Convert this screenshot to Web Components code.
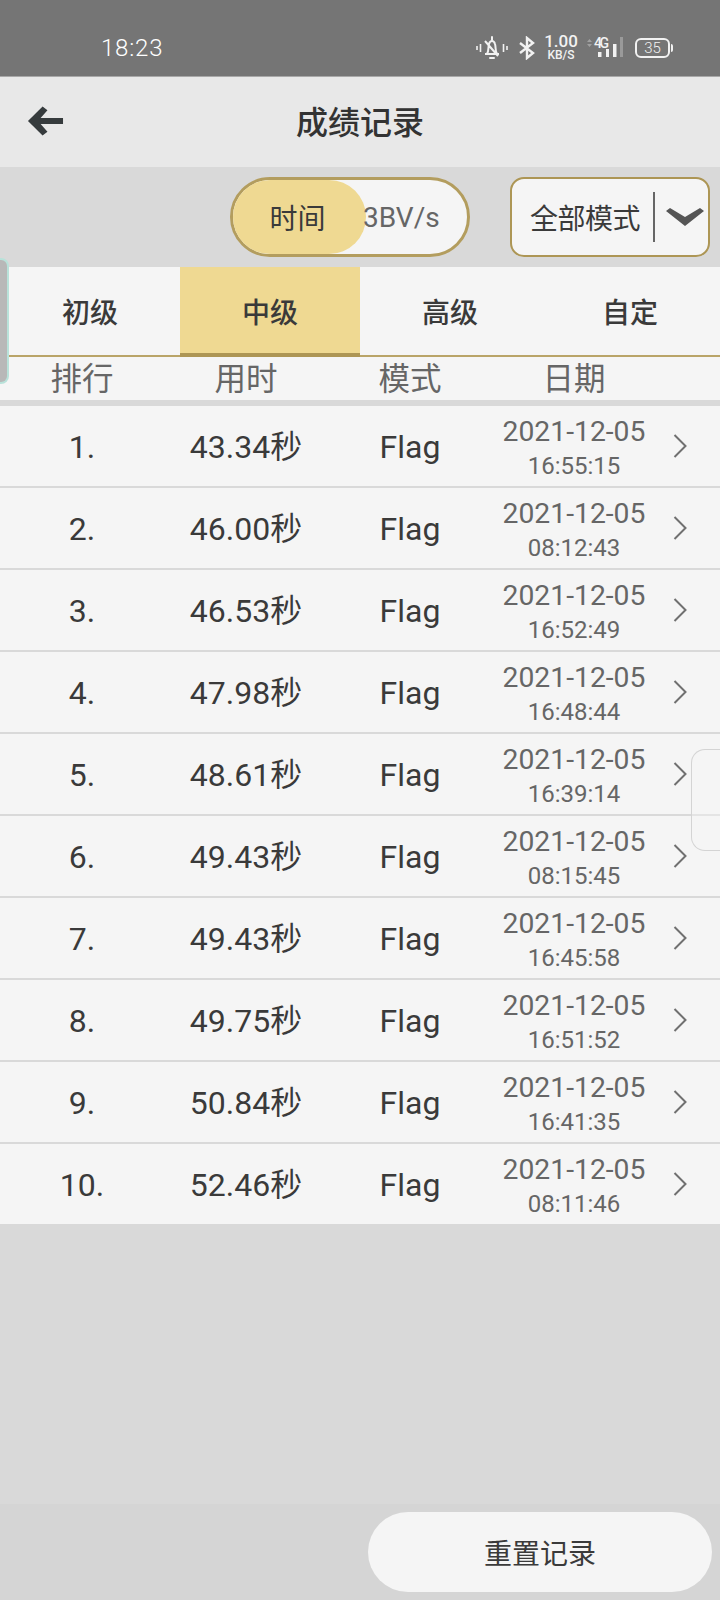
<!DOCTYPE html>
<html lang="zh">
<head>
<meta charset="utf-8">
<title>成绩记录</title>
<style>
    html, body { margin: 0; padding: 0; }
    body {
        width: 720px; height: 1600px; overflow: hidden; position: relative;
        background: #d9d9d9; color: #333;
        font-family: Roboto, "Noto Sans CJK SC", sans-serif;
        display: flex; flex-direction: column;
    }
    .spacer { flex: 1; }
</style>
</head>
<body>
<status-bar></status-bar>
<app-bar>成绩记录</app-bar>
<record-controls></record-controls>
<level-tabs></level-tabs>
<record-header></record-header>
<record-list></record-list>
<div class="spacer"></div>
<reset-footer>重置记录</reset-footer>
<side-handle side="left"></side-handle>
<side-handle side="right"></side-handle>

<script>
const RECORDS = [
    ['1.', '43.34秒', '16:55:15'],
    ['2.', '46.00秒', '08:12:43'],
    ['3.', '46.53秒', '16:52:49'],
    ['4.', '47.98秒', '16:48:44'],
    ['5.', '48.61秒', '16:39:14'],
    ['6.', '49.43秒', '08:15:45'],
    ['7.', '49.43秒', '16:45:58'],
    ['8.', '49.75秒', '16:51:52'],
    ['9.', '50.84秒', '16:41:35'],
    ['10.', '52.46秒', '08:11:46']
];

class StatusBar extends HTMLElement {
    constructor() {
        super();
        this.attachShadow({ mode: 'open' });
        this.shadowRoot.innerHTML = `
            <style>
                :host {
                    display: flex; align-items: center; box-sizing: border-box;
                    height: 77px; padding: 19px 0 0 101px; flex: none;
                    background: #757575; border-bottom: 1px solid #a8a8a8;
                    color: #f2f2f2;
                }
                .time { font-size: 24px; font-weight: 300; letter-spacing: 0.8px; color: #fff; }
                .icons { margin-left: auto; margin-right: 47px; display: flex; align-items: center; }
                .speed { display: flex; flex-direction: column; align-items: center; width: 34px; margin: 0 7px 0 9px; font-weight: 500; }
                .speed b { font-size: 17px; line-height: 15px; font-weight: 500; }
                .speed span { font-size: 12px; line-height: 12px; }
                svg { display: block; }
            </style>
            <span class="time">18:23</span>
            <div class="icons">
                <svg width="32" height="28" viewBox="0 0 32 28" fill="none" stroke="#f2f2f2" stroke-width="2">
                    <path d="M1 12v4M4.5 10v8M27.5 10v8M31 12v4" stroke-width="1.6"/>
                    <path d="M9 20h14M11 20c2-3 1-7 2-10 .6-2 2-3 3-3s2.4 1 3 3c1 3 0 7 2 10M9 7l13 15"/>
                    <path d="M16 3v3M14 24h4" stroke-linecap="round"/>
                </svg>
                <svg style="margin-left:11px" width="16" height="24" viewBox="0 0 16 24" fill="none" stroke="#f2f2f2" stroke-width="2.4">
                    <path d="M1 7l13 10-6 5V2l6 5L1 17"/>
                </svg>
                <div class="speed"><b>1.00</b><span>KB/S</span></div>
                <svg width="38" height="28" viewBox="0 0 38 28">
                    <path d="M2 8l2.500-3 2.500 3zM2 10l2.500 3 2.500-3z" fill="#a0a0a0"/>
                    <text x="9" y="14" font-size="14" font-weight="500" font-family="Roboto" fill="#f2f2f2" textLength="15">4G</text>
                    <rect x="13" y="18" width="3.500" height="5" fill="#f2f2f2"/>
                    <rect x="21" y="15" width="3" height="8" fill="#f2f2f2"/>
                    <rect x="28" y="10" width="3.500" height="13" fill="#f2f2f2"/>
                    <rect x="35" y="3" width="3" height="20" fill="#9a9a9a"/>
                </svg>
                <div style="margin-left:12px;display:flex;align-items:center">
                    <div style="box-sizing:border-box;width:35px;height:20px;border:2px solid #f2f2f2;border-radius:6px;font-size:15px;line-height:16px;text-align:center;font-weight:300">35</div>
                    <div style="width:2px;height:8px;background:#f2f2f2;margin-left:1px;border-radius:0 2px 2px 0"></div>
                </div>
            </div>
        `;
    }
}

class AppBar extends HTMLElement {
    constructor() {
        super();
        this.attachShadow({ mode: 'open' });
        this.shadowRoot.innerHTML = `
            <style>
                :host {
                    display: flex; align-items: center; justify-content: center;
                    position: relative; flex: none; box-sizing: border-box; height: 90px; padding-bottom: 4px;
                    background: #e8e8e8; color: #333;
                    font-size: 32px; font-weight: 500;
                }
                svg { position: absolute; left: 27px; top: 28px; }
            </style>
            <svg width="37" height="32" viewBox="0 0 38 32" fill="#363b3d">
                <path d="M16 1l5 4-7 8h23v6H14l7 8-5 4L1 16z"/>
            </svg>
            <slot></slot>
        `;
    }
}

class RecordControls extends HTMLElement {
    constructor() {
        super();
        this.attachShadow({ mode: 'open' });
        this.shadowRoot.innerHTML = `
            <style>
                :host {
                    display: flex; align-items: center; justify-content: flex-end; gap: 40px;
                    box-sizing: border-box; flex: none; height: 100px; padding: 0 10px 0 0;
                    font-size: 28px; background: #d9d9d9;
                }
                .toggle {
                    box-sizing: border-box; width: 240px; height: 80px; display: flex; overflow: hidden;
                    border: 3px solid #b39d5e; border-radius: 40px; background: #f5f5f5;
                }
                .on {
                    width: 133px; padding-right: 4px; box-sizing: border-box; display: flex; align-items: center; justify-content: center;
                    background: #efd992; border-radius: 0 38px 38px 0; color: #3a3a3a;
                }
                .off { display: flex; align-items: center; margin-left: -3px; color: #666; }
                .select {
                    box-sizing: border-box; width: 200px; height: 80px; display: flex; align-items: center;
                    border: 2px solid #ad9655; border-radius: 14px; background: #f5f5f5; color: #3a3a3a;
                    padding-left: 18px; white-space: nowrap; letter-spacing: -0.5px;
                }
                .bar { width: 2px; height: 50px; background: #666; margin: 0 11px 0 13px; flex: none; }
            </style>
            <div class="toggle"><div class="on">时间</div><div class="off">3BV/s</div></div>
            <div class="select">
                <span>全部模式</span><span class="bar"></span>
                <svg width="38" height="20" viewBox="0 0 38 20" fill="#555"><path d="M0 4l4-3 15 9 15-9 4 3-19 15z"/></svg>
            </div>
        `;
    }
}

class LevelTabs extends HTMLElement {
    constructor() {
        super();
        this.attachShadow({ mode: 'open' });
        const tabs = ['初级', '中级', '高级', '自定'];
        this.shadowRoot.innerHTML = `
            <style>
                :host {
                    display: grid; grid-template-columns: repeat(4, 180px); flex: none;
                    box-sizing: border-box; height: 90px; background: #f5f5f5;
                    border-bottom: 2px solid #b9a468;
                    font-size: 28px; font-weight: 500; color: #3a3a3a;
                }
                div { display: flex; align-items: center; justify-content: center; box-sizing: border-box; }
                .active { background: #efd992; border-bottom: 4px solid #ad9655; margin-bottom: -2px; height: 90px; padding-top: 2px; }
            </style>
            ${tabs.map((t, i) => `<div class="${i === 1 ? 'active' : ''}">${t}</div>`).join('')}
        `;
    }
}

class RecordHeader extends HTMLElement {
    constructor() {
        super();
        this.attachShadow({ mode: 'open' });
        this.shadowRoot.innerHTML = `
            <style>
                :host {
                    display: grid; grid-template-columns: repeat(4, 164px) 1fr; align-items: center;
                    box-sizing: border-box; flex: none; height: 49px; background: #f5f5f5;
                    border-bottom: 6px solid #d9d9d9; padding-top: 2px; line-height: 36px;
                    font-size: 31.5px; color: #666; text-align: center;
                }
            </style>
            <span>排行</span><span>用时</span><span>模式</span><span>日期</span>
        `;
    }
}

class RecordRow extends HTMLElement {
    connectedCallback() {
        if (this.shadowRoot) return;
        this.attachShadow({ mode: 'open' });
        const d = this.dataset;
        this.shadowRoot.innerHTML = `
            <style>
                :host {
                    display: grid; grid-template-columns: repeat(4, 164px) 1fr; align-items: center;
                    box-sizing: border-box; height: 82px; background: #f5f5f5;
                    border-bottom: 2px solid #d9d9d9;
                    font-size: 32px; line-height: 36px; color: #3a3a3a; text-align: center;
                }
                :host(:last-child) { border-bottom: 0; height: 80px; }
                .cell { display: block; height: 36px; margin-top: 1px; overflow: visible; }
                .date { font-size: 28.3px; line-height: 36px; color: #666; }
                .clock { font-size: 24px; line-height: 32px; color: #666; }
                .date-cell { display: flex; flex-direction: column; margin-top: 4px; }
                svg { margin-left: 17px; display: block; }
            </style>
            <span class="cell">${d.rank}</span>
            <span class="cell">${d.time}</span>
            <span class="cell">Flag</span>
            <div class="date-cell"><span class="date">2021-12-05</span><span class="clock">${d.clock}</span></div>
            <svg width="14" height="24" viewBox="0 0 14 24" fill="none" stroke="#707070" stroke-width="2"><path d="M1.5 1l11 11-11 11"/></svg>
        `;
    }
}

class RecordList extends HTMLElement {
    constructor() {
        super();
        this.attachShadow({ mode: 'open' });
        this.shadowRoot.innerHTML = `
            <style>:host { display: block; flex: none; }</style>
            <slot></slot>
        `;
    }

    connectedCallback() {
        if (this.children.length) return;
        RECORDS.forEach(r => {
            const row = document.createElement('record-row');
            row.dataset.rank = r[0];
            row.dataset.time = r[1];
            row.dataset.clock = r[2];
            this.appendChild(row);
        });
    }
}

class ResetFooter extends HTMLElement {
    constructor() {
        super();
        this.attachShadow({ mode: 'open' });
        this.shadowRoot.innerHTML = `
            <style>
                :host {
                    display: flex; justify-content: flex-end; flex: none; box-sizing: border-box;
                    height: 96px; padding: 8px 8px 8px 0; background: #d5d5d5;
                }
                button {
                    width: 344px; height: 80px; border: 0; border-radius: 40px; background: #f5f5f5;
                    font: 28px Roboto, "Noto Sans CJK SC", sans-serif; color: #3a3a3a;
                }
            </style>
            <button><slot></slot></button>
        `;
    }
}

class SideHandle extends HTMLElement {
    constructor() {
        super();
        this.attachShadow({ mode: 'open' });
        this.shadowRoot.innerHTML = `
            <style>
                :host { display: block; position: absolute; box-sizing: border-box; }
                :host([side="left"]) {
                    left: 0; top: 258px; width: 9px; height: 126px;
                    background: #b8b8b8; border: 2px solid #b9e2da; border-left: 0;
                    border-radius: 0 8px 8px 0;
                }
                :host([side="right"]) {
                    right: 0; top: 749px; width: 29px; height: 102px;
                    border: 1px solid #d4d4d4; border-right: 0;
                    border-radius: 14px 0 0 14px; background: rgba(245,245,245,0.4);
                }
            </style>
        `;
    }
}

customElements.define('record-row', RecordRow);
customElements.define('record-list', RecordList);
customElements.define('status-bar', StatusBar);
customElements.define('app-bar', AppBar);
customElements.define('record-controls', RecordControls);
customElements.define('level-tabs', LevelTabs);
customElements.define('record-header', RecordHeader);
customElements.define('reset-footer', ResetFooter);
customElements.define('side-handle', SideHandle);
</script>
</body>
</html>
